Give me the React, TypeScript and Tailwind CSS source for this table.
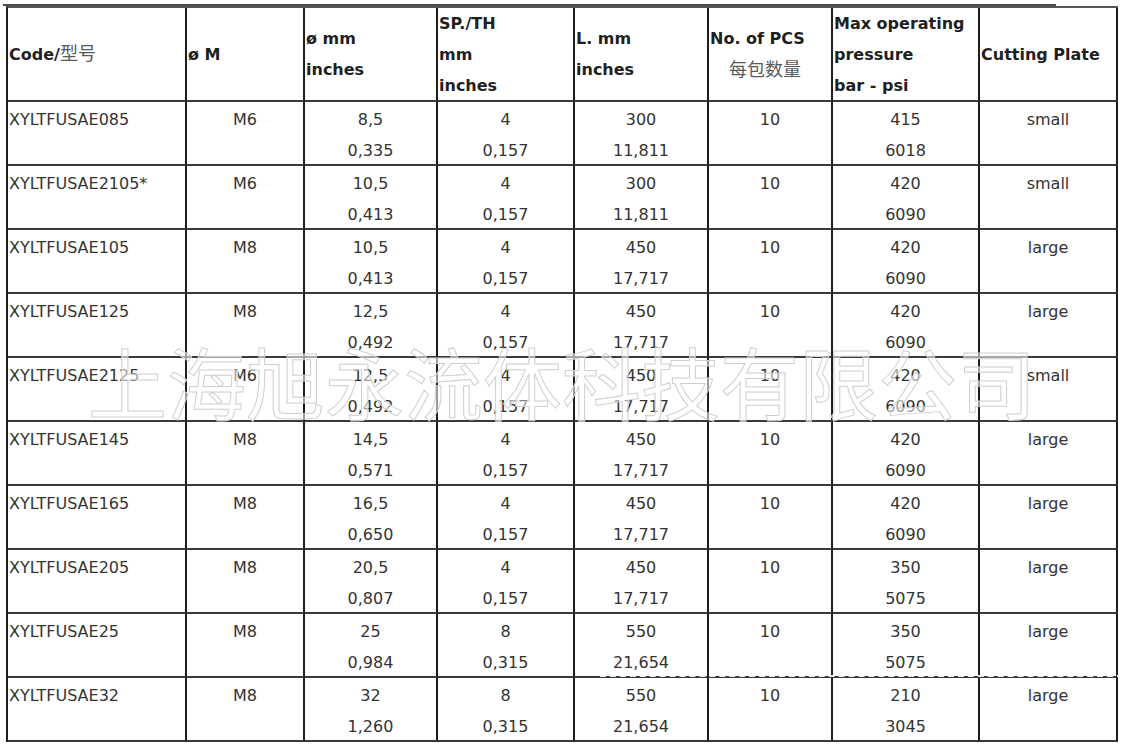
import React from "react";

type Row = [string, string, string, string, string, string, string, string, string, string, string, string];

const rows: Row[] = [
  ["XYLTFUSAE085", "M6", "8,5", "0,335", "4", "0,157", "300", "11,811", "10", "415", "6018", "small"],
  ["XYLTFUSAE2105*", "M6", "10,5", "0,413", "4", "0,157", "300", "11,811", "10", "420", "6090", "small"],
  ["XYLTFUSAE105", "M8", "10,5", "0,413", "4", "0,157", "450", "17,717", "10", "420", "6090", "large"],
  ["XYLTFUSAE125", "M8", "12,5", "0,492", "4", "0,157", "450", "17,717", "10", "420", "6090", "large"],
  ["XYLTFUSAE2125", "M6", "12,5", "0,492", "4", "0,157", "450", "17,717", "10", "420", "6090", "small"],
  ["XYLTFUSAE145", "M8", "14,5", "0,571", "4", "0,157", "450", "17,717", "10", "420", "6090", "large"],
  ["XYLTFUSAE165", "M8", "16,5", "0,650", "4", "0,157", "450", "17,717", "10", "420", "6090", "large"],
  ["XYLTFUSAE205", "M8", "20,5", "0,807", "4", "0,157", "450", "17,717", "10", "350", "5075", "large"],
  ["XYLTFUSAE25", "M8", "25", "0,984", "8", "0,315", "550", "21,654", "10", "350", "5075", "large"],
  ["XYLTFUSAE32", "M8", "32", "1,260", "8", "0,315", "550", "21,654", "10", "210", "3045", "large"],
];

const cell = "border-r-2 border-b-2 border-r-[#1e1e1e] border-b-[#3a3a3a] h-[64px] pt-[2px] leading-[31px]";
const head = "border-r-2 border-b-2 border-r-[#1e1e1e] border-b-[#3a3a3a] h-[94px] flex flex-col justify-center pl-[1px] leading-[31px] font-bold text-[#1f1f1f]";

export default function App() {
  return (
    <div
      className="relative w-[1123px] h-[748px] bg-white overflow-hidden text-[16px] text-[#333]"
      style={{ fontFamily: '"DejaVu Sans", Verdana, "Noto Sans CJK SC", sans-serif' }}
    >
      <div className="ml-[3px] mt-[4px] w-[1053px] h-[2px] bg-[#4d4d4d]" />
      <div className="ml-[6px] w-[1112px] border-l-2 border-t-2 border-l-[#1e1e1e] border-t-[#555] grid grid-cols-[179px_118px_133px_137px_134px_124px_147px_138px]">
        <div className={head}>
          <div>
            Code/<span className="font-normal text-[18px] text-[#5a5a5a]">型号</span>
          </div>
        </div>
        <div className={head}>
          <div>ø M</div>
        </div>
        <div className={head}>
          <div>ø mm</div>
          <div>inches</div>
        </div>
        <div className={head}>
          <div>SP./TH</div>
          <div>mm</div>
          <div>inches</div>
        </div>
        <div className={head}>
          <div>L. mm</div>
          <div>inches</div>
        </div>
        <div className={head}>
          <div>No. of PCS</div>
          <div className="font-normal text-[18px] text-[#5a5a5a] pl-[19px]">每包数量</div>
        </div>
        <div className={head}>
          <div>Max operating</div>
          <div>pressure</div>
          <div>bar - psi</div>
        </div>
        <div className={head}>
          <div>Cutting Plate</div>
        </div>

        {rows.map((r, i) => (
          <React.Fragment key={i}>
            <div className={`${cell} pl-[1px]`}>{r[0]}</div>
            <div className={`${cell} text-center`}>{r[1]}</div>
            <div className={`${cell} text-center`}>
              <div>{r[2]}</div>
              <div>{r[3]}</div>
            </div>
            <div className={`${cell} text-center`}>
              <div>{r[4]}</div>
              <div>{r[5]}</div>
            </div>
            <div className={`${cell} text-center`}>
              <div>{r[6]}</div>
              <div>{r[7]}</div>
            </div>
            <div className={`${cell} text-center`}>{r[8]}</div>
            <div className={`${cell} text-center`}>
              <div>{r[9]}</div>
              <div>{r[10]}</div>
            </div>
            <div className={`${cell} text-center`}>{r[11]}</div>
          </React.Fragment>
        ))}
      </div>

      <div
        className="absolute left-[88px] top-[341px] text-[79px] leading-none whitespace-nowrap text-[rgba(255,255,255,0.55)] [-webkit-text-stroke:1px_#cfcfcf] pointer-events-none"
        style={{ fontFamily: '"Noto Sans CJK SC", sans-serif' }}
      >
        上海旭永流体科技有限公司
      </div>
      <div className="absolute left-[600px] top-[675px] w-[523px] border-t-2 border-dashed border-white opacity-90 pointer-events-none" />
    </div>
  );
}
